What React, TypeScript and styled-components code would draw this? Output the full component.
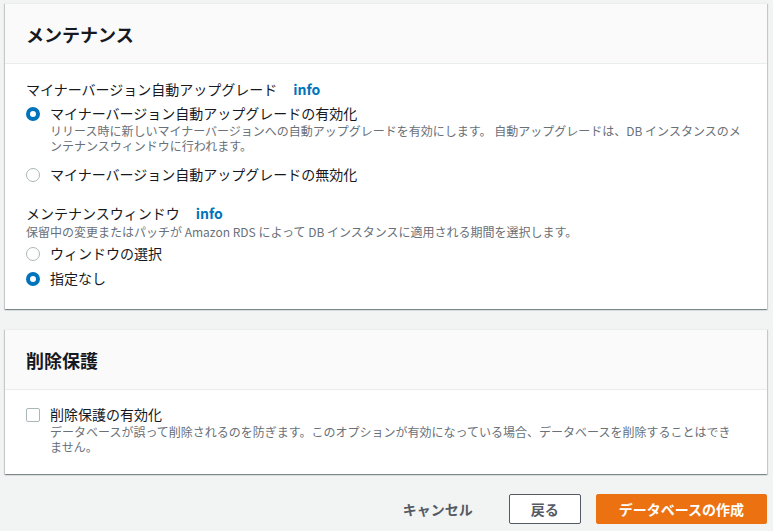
import React from 'react'
import styled, { createGlobalStyle } from 'styled-components'

const GlobalStyle = createGlobalStyle`
  html, body {
    margin: 0;
    padding: 0;
    background: #f2f3f3;
  }
  body {
    font-family: 'Noto Sans CJK JP', 'Noto Sans', sans-serif;
    color: #16191f;
  }
`

interface ChoiceProps {
  label: string
  description?: string
  checked?: boolean
}

const RadioOption = ({ label, description, checked }: ChoiceProps) => (
  <Option>
    <RadioMark checked={!!checked} />
    <OptionText>
      <OptionLabel>{label}</OptionLabel>
      {description && <Description>{description}</Description>}
    </OptionText>
  </Option>
)

const CheckOption = ({ label, description }: ChoiceProps) => (
  <Option>
    <CheckMark />
    <OptionText>
      <OptionLabel>{label}</OptionLabel>
      {description && <Description>{description}</Description>}
    </OptionText>
  </Option>
)

const App = () => {
  return (
    <Page>
      <GlobalStyle />
      <Panel>
        <PanelHeader>
          <Title>メンテナンス</Title>
        </PanelHeader>
        <PanelBody>
          <Field>
            <FieldLabel>
              マイナーバージョン自動アップグレード<Info>info</Info>
            </FieldLabel>
            <OptionGroup gap={11}>
              <RadioOption
                checked
                label='マイナーバージョン自動アップグレードの有効化'
                description='リリース時に新しいマイナーバージョンへの自動アップグレードを有効にします。 自動アップグレードは、DB インスタンスのメンテナンスウィンドウに行われます。'
              />
              <RadioOption label='マイナーバージョン自動アップグレードの無効化' />
            </OptionGroup>
          </Field>
          <Field>
            <FieldLabel>
              メンテナンスウィンドウ<Info>info</Info>
            </FieldLabel>
            <FieldHint>
              保留中の変更またはパッチが Amazon RDS によって DB インスタンスに適用される期間を選択します。
            </FieldHint>
            <OptionGroup gap={5}>
              <RadioOption label='ウィンドウの選択' />
              <RadioOption checked label='指定なし' />
            </OptionGroup>
          </Field>
        </PanelBody>
      </Panel>

      <Panel>
        <PanelHeader>
          <Title>削除保護</Title>
        </PanelHeader>
        <PanelBody bottom={20}>
          <CheckOption
            label='削除保護の有効化'
            description='データベースが誤って削除されるのを防ぎます。このオプションが有効になっている場合、データベースを削除することはできません。'
          />
        </PanelBody>
      </Panel>

      <Actions>
        <LinkButton>キャンセル</LinkButton>
        <NormalButton>戻る</NormalButton>
        <PrimaryButton>データベースの作成</PrimaryButton>
      </Actions>
    </Page>
  )
}

const Page = styled.div`
  padding: 3px 6px 0 5px;
  display: flex;
  flex-direction: column;
  gap: 20px;
`

const Panel = styled.section`
  background: #fff;
  border-top: 1px solid #eaeded;
  box-shadow: 0 1px 1px 0 rgba(0, 28, 36, 0.3), 1px 1px 1px 0 rgba(0, 28, 36, 0.15),
    -1px 1px 1px 0 rgba(0, 28, 36, 0.15);
`

const PanelHeader = styled.header`
  height: 59px;
  background: #fafafa;
  border-bottom: 1px solid #eaeded;
  display: flex;
  align-items: center;
  padding: 0 21px;
`

const Title = styled.h2`
  margin: 0;
  font-size: 18px;
  font-weight: 700;
  line-height: 24px;
  color: #16191f;
`

const PanelBody = styled.div<{ bottom?: number }>`
  padding: 14px 26px ${p => p.bottom ?? 21}px 21px;
  display: flex;
  flex-direction: column;
  gap: 18px;
`

const Field = styled.div`
  display: flex;
  flex-direction: column;
`

const FieldLabel = styled.div`
  font-size: 14px;
  line-height: 22px;
  color: #16191f;
`

const Info = styled.span`
  margin-left: 16px;
  color: #0073bb;
  font-weight: 700;
`

const FieldHint = styled.div`
  font-size: 12px;
  line-height: 16px;
  color: #687078;
`

const OptionGroup = styled.div<{ gap: number }>`
  display: flex;
  flex-direction: column;
  gap: ${p => p.gap}px;
  margin-top: 3px;
`

const Option = styled.label`
  display: flex;
  align-items: flex-start;
  gap: 10px;
`

const RadioMark = styled.span<{ checked: boolean }>`
  flex: none;
  box-sizing: border-box;
  width: 14px;
  height: 14px;
  margin-top: 4px;
  border-radius: 50%;
  background: #fff;
  border: ${p => (p.checked ? '4px solid #0073bb' : '1px solid #aab7b8')};
`

const CheckMark = styled.span`
  flex: none;
  box-sizing: border-box;
  width: 14px;
  height: 14px;
  margin-top: 4px;
  border-radius: 2px;
  background: #fff;
  border: 1px solid #aab7b8;
`

const OptionText = styled.div`
  display: flex;
  flex-direction: column;
`

const OptionLabel = styled.span`
  font-size: 14px;
  line-height: 20px;
  color: #16191f;
`

const Description = styled.span`
  font-size: 12px;
  line-height: 15px;
  color: #687078;
`

const Actions = styled.div`
  display: flex;
  justify-content: flex-end;
  align-items: center;
  gap: 15px;
`

const BaseButton = styled.button`
  height: 30px;
  padding: 0 21px;
  font-family: inherit;
  font-size: 14px;
  font-weight: 700;
  border-radius: 2px;
  cursor: pointer;
`

const LinkButton = styled(BaseButton)`
  border: none;
  background: transparent;
  color: #545b64;
`

const NormalButton = styled(BaseButton)`
  border: 1px solid #545b64;
  background: #fff;
  color: #545b64;
`

const PrimaryButton = styled(BaseButton)`
  border: 1px solid #ec7211;
  background: #ec7211;
  color: #fff;
  padding: 0 22px;
`

export default App
